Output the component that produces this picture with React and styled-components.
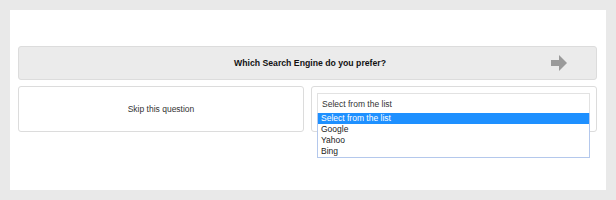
import React from "react";
import styled, { createGlobalStyle } from "styled-components";

const GlobalStyle = createGlobalStyle`
  html, body {
    margin: 0;
    padding: 0;
    background: #e9e9e9;
  }
  body {
    padding: 10px;
    font-family: "Liberation Sans", Arial, sans-serif;
  }
`;

const options = ["Select from the list", "Google", "Yahoo", "Bing"];

export default function App() {
  return (
    <>
      <GlobalStyle />
      <Panel>
        <QuestionBar>
          <span />
          <QuestionText>Which Search Engine do you prefer?</QuestionText>
          <NextButton>
            <svg width="16" height="16" viewBox="0 0 16 16">
              <path d="M0 5h8V0l8 8-8 8v-5H0z" fill="#9a9a9a" />
            </svg>
          </NextButton>
        </QuestionBar>
        <Answers>
          <Card>
            <SkipText>Skip this question</SkipText>
          </Card>
          <Card $align="start">
            <SelectWrap>
              <SelectField>Select from the list</SelectField>
              <OptionList>
                {options.map((o, i) => (
                  <Option key={o} $active={i === 0}>{o}</Option>
                ))}
              </OptionList>
            </SelectWrap>
          </Card>
        </Answers>
      </Panel>
    </>
  );
}

const Panel = styled.div`
  background: #fff;
  width: 596px;
  height: 180px;
  box-sizing: border-box;
  padding: 36px 9px 0 8px;
  display: flex;
  flex-direction: column;
  gap: 6px;
`;

const QuestionBar = styled.div`
  height: 34px;
  box-sizing: border-box;
  background: #ebebeb;
  border: 1px solid #dcdcdc;
  border-radius: 3px;
  display: grid;
  grid-template-columns: 1fr auto 1fr;
  align-items: center;
  padding-right: 29px;
  padding-left: 34px;
`;

const QuestionText = styled.div`
  font-size: 8.7px;
  font-weight: bold;
  color: #111;
`;

const NextButton = styled.div`
  justify-self: end;
  display: flex;
  cursor: pointer;
`;

const Answers = styled.div`
  display: grid;
  grid-template-columns: 1fr 1fr;
  gap: 7px;
`;

const Card = styled.div`
  position: relative;
  height: 46px;
  box-sizing: border-box;
  border: 1px solid #dcdcdc;
  border-radius: 3px;
  background: #fff;
  display: flex;
  align-items: ${(p) => (p.$align === "start" ? "flex-start" : "center")};
  justify-content: center;
  padding: ${(p) => (p.$align === "start" ? "6px 6px 0 5px" : "0")};
`;

const SkipText = styled.div`
  font-size: 8.5px;
  color: #333;
`;

const SelectWrap = styled.div`
  position: relative;
  width: 100%;
`;

const SelectField = styled.div`
  height: 20px;
  box-sizing: border-box;
  border: 1px solid #e2e2e2;
  border-bottom: none;
  padding: 0 4px;
  display: flex;
  align-items: center;
  font-size: 8.5px;
  color: #333;
`;

const OptionList = styled.div`
  position: absolute;
  left: 0;
  right: 0;
  top: 20px;
  background: #fff;
  border: 1px solid #b4c8ec;
  border-top: none;
  z-index: 2;
`;

const Option = styled.div`
  height: 11px;
  line-height: 11px;
  padding: 0 3px;
  font-size: 8.5px;
  color: ${(p) => (p.$active ? "#fff" : "#222")};
  background: ${(p) => (p.$active ? "#1e90ff" : "transparent")};
`;
